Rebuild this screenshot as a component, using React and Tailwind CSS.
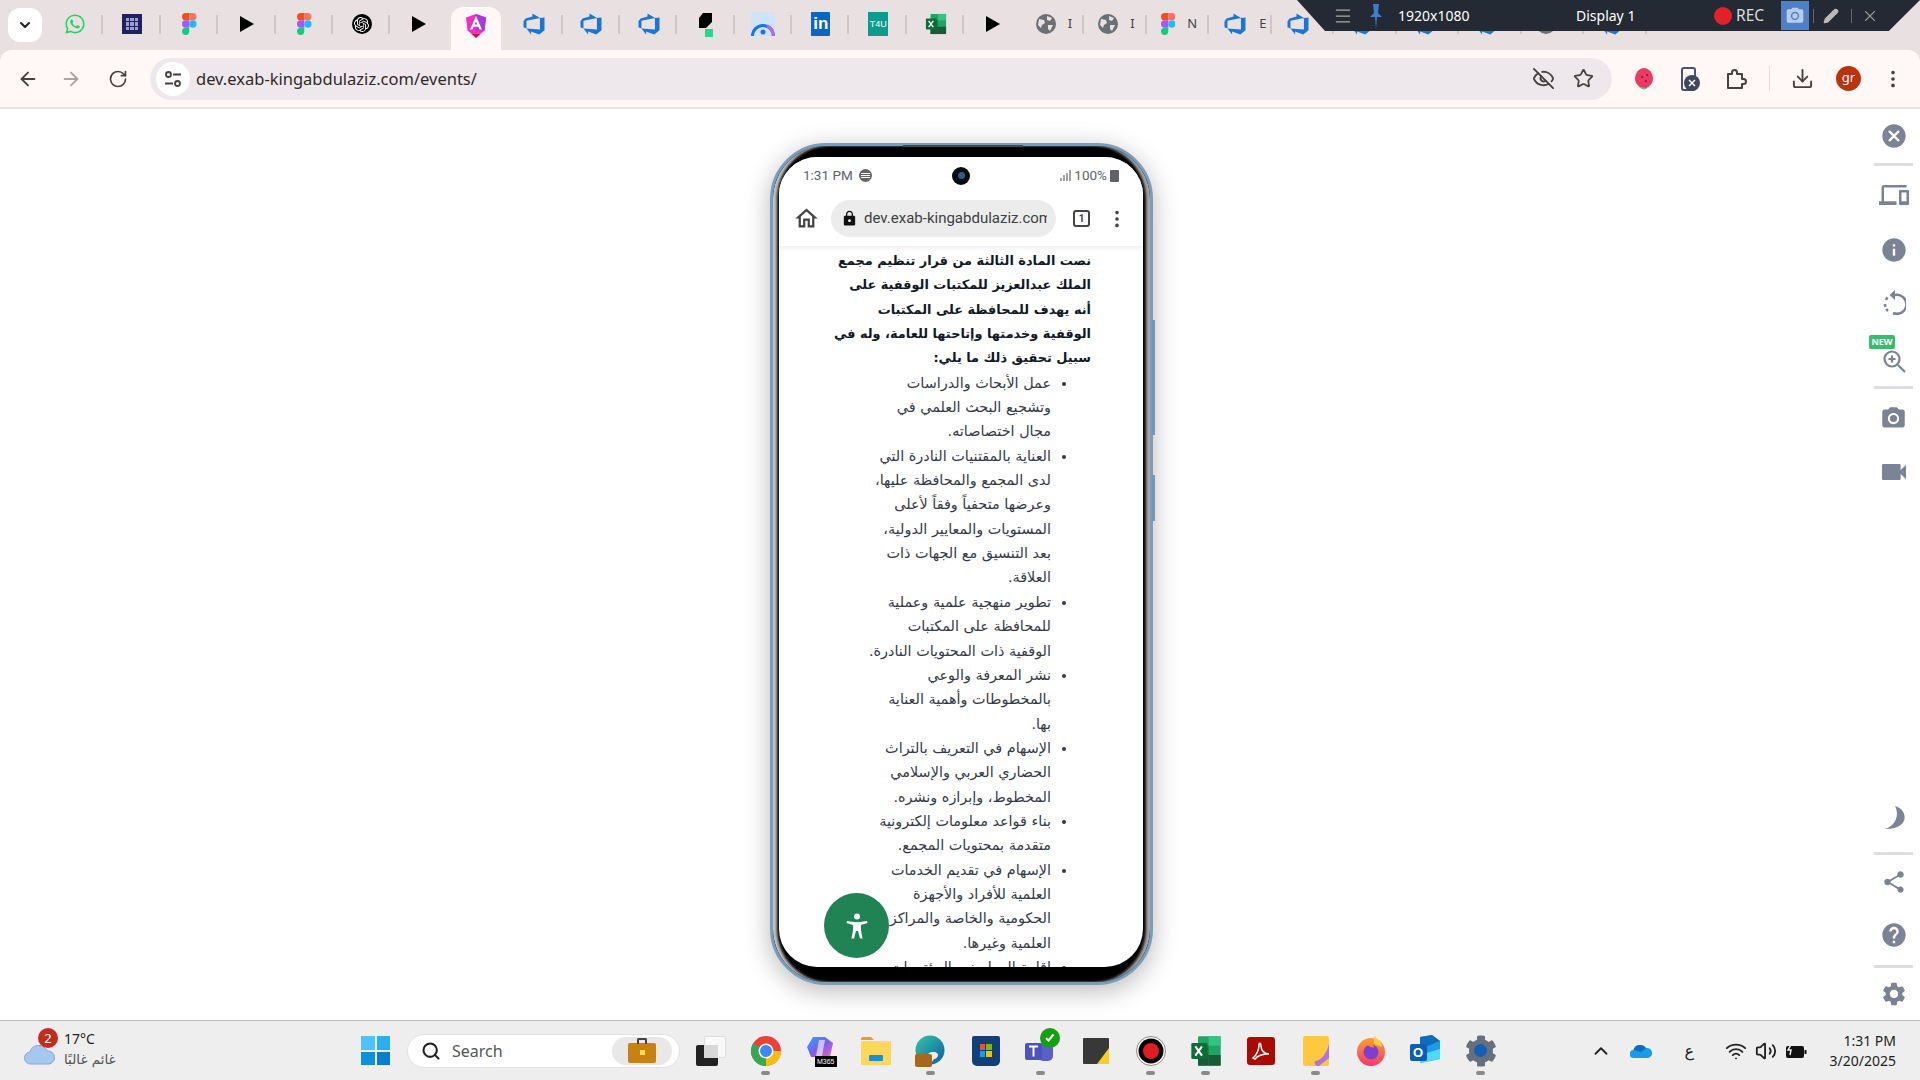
import React from "react";
import { ArrowLeft, ArrowRight, RotateCw, Star, EyeOff, Download, EllipsisVertical, Menu, Pencil, X, ChevronUp, Wifi, Volume2, Search } from "lucide-react";
import { FaWhatsapp, FaCog } from "react-icons/fa";
import { SiOpenai } from "react-icons/si";
import { VscAzureDevops } from "react-icons/vsc";
import { MdCancel, MdInfo, MdHelp, MdCameraAlt, MdVideocam, MdShare, MdSettings, MdDevices, MdLock, MdOutlineHome } from "react-icons/md";

const Figma = ({ s = 22 }) => (
  <svg width={s * 0.66} height={s} viewBox="0 0 16 24">
    <path d="M4 0h4v8H4a4 4 0 010-8z" fill="#f24e1e" />
    <path d="M8 0h4a4 4 0 010 8H8z" fill="#ff7262" />
    <path d="M4 8h4v8H4a4 4 0 010-8z" fill="#a259ff" />
    <circle cx="12" cy="12" r="4" fill="#1abcfe" />
    <path d="M4 16h4v4a4 4 0 11-4-4z" fill="#0acf83" />
  </svg>
);
const Play = () => <svg width="14" height="16" viewBox="0 0 14 16"><path d="M0 0l14 8-14 8z" fill="#000" /></svg>;
const Globe = () => (
  <svg width="20" height="20" viewBox="0 0 20 20">
    <circle cx="10" cy="10" r="10" fill="#6b6f76" />
    <path d="M3 5l5 1 1 3-3 2-1 3-3-3zM11 2l5 2-2 3-3-1zM12 11l5 0-3 6-2-2z" fill="#e9e0e1" />
  </svg>
);
const Azure = ({ s = 24 }) => <VscAzureDevops size={s} color="#1976d8" />;
const Excel = ({ s = 22 }) => (
  <svg width={s} height={s} viewBox="0 0 24 24">
    <rect x="6" y="1" width="17" height="22" rx="1" fill="#21a366" />
    <rect x="14" y="1" width="9" height="7" fill="#33c481" />
    <rect x="6" y="8" width="8" height="7" fill="#107c41" />
    <rect x="14" y="15" width="9" height="8" fill="#185c37" />
    <rect x="6" y="15" width="8" height="8" fill="#185c37" />
    <rect x="1" y="6" width="12" height="12" rx="1" fill="#0e6c3a" />
    <path d="M4 8.500l5 7M9 8.500l-5 7" stroke="#fff" strokeWidth="1.500" />
  </svg>
);

const tabs = [
  <FaWhatsapp size={22} color="#25d366" />,
  <div className="w-5 h-5 bg-[#23205f] grid grid-cols-3 gap-px p-1"><i className="bg-[#9aa0d8]" /><i className="bg-[#9aa0d8]" /><i className="bg-[#9aa0d8]" /><i className="bg-[#9aa0d8]" /><i className="bg-[#9aa0d8]" /><i className="bg-[#9aa0d8]" /><i className="bg-[#9aa0d8]" /><i className="bg-[#9aa0d8]" /><i className="bg-[#9aa0d8]" /></div>,
  <Figma />,
  <Play />,
  <Figma />,
  <div className="w-5 h-5 rounded-full bg-black flex items-center justify-center"><SiOpenai size={15} color="#fff" /></div>,
  <Play />,
  <svg width="20" height="24" viewBox="0 0 20 24"><path d="M10 0l10 3.500-1.500 13-3.500 3H5l-3.500-3L0 3.500z" fill="#f02fc2" /><path d="M10 0l10 3.500-1.500 13H10z" fill="#a43ae0" /><path d="M10 2l6 13.500h-2.600l-1-2.700H7.600l-1 2.700H4zM10 7.500L8.800 10.500h2.400z" fill="#fff" /><path d="M5 19.500h10l-5 4.500z" fill="#e4003a" /></svg>,
  <Azure />, <Azure />, <Azure />,
  <svg width="16" height="26" viewBox="0 0 16 26"><path d="M5 2h9v9l-6 6H1V7z" fill="#000" /><rect x="7" y="18" width="8" height="8" fill="#2bd48f" /></svg>,
  <svg width="24" height="24" viewBox="0 0 24 24"><rect width="24" height="24" rx="1" fill="#cfe3fb" /><path d="M1.500 24a10.500 10.500 0 0121 0" fill="none" stroke="#1a73e8" strokeWidth="3" /><path d="M16 14a10 10 0 016 10" fill="none" stroke="#b26cf0" strokeWidth="3" /><circle cx="12" cy="20" r="2.500" fill="#1a73e8" /></svg>,
  <div className="w-[19px] h-6 bg-[#0a66c2] rounded-[1px] text-white font-bold text-[17px] leading-6 text-center font-['Liberation_Sans',sans-serif]">in</div>,
  <div className="w-5 h-6 bg-[#0c9c8e] text-white text-[9px] leading-6 text-center font-['Liberation_Sans',sans-serif]">T4U</div>,
  <Excel />,
  <Play />,
];
const tabs2 = [
  [<Globe />, "I"], [<Globe />, "I"], [<Figma />, "N"], [<Azure />, "E"], [<Azure />, ""], [<Azure />, ""], [<Azure />, ""], [<Azure />, ""], [<Globe />, ""], [<Azure />, ""],
];

const Sep = () => <div className="w-[39px] h-[3px] bg-[#dcdde0] shrink-0" />;
const SideIcon = ({ children, h = 53 }) => <div className="flex items-center justify-center w-[39px] shrink-0" style={{ height: h }}>{children}</div>;
const bold = ["نصت المادة الثالثة من قرار تنظيم مجمع", "الملك عبدالعزيز للمكتبات الوقفية على", "أنه يهدف للمحافظة على المكتبات", "الوقفية وخدمتها وإتاحتها للعامة، وله في", "سبيل تحقيق ذلك ما يلي:"];
const items = [
  ["عمل الأبحاث والدراسات", "وتشجيع البحث العلمي في", "مجال اختصاصاته."],
  ["العناية بالمقتنيات النادرة التي", "لدى المجمع والمحافظة عليها،", "وعرضها متحفياً وفقاً لأعلى", "المستويات والمعايير الدولية،", "بعد التنسيق مع الجهات ذات", "العلاقة."],
  ["تطوير منهجية علمية وعملية", "للمحافظة على المكتبات", "الوقفية ذات المحتويات النادرة."],
  ["نشر المعرفة والوعي", "بالمخطوطات وأهمية العناية", "بها."],
  ["الإسهام في التعريف بالتراث", "الحضاري العربي والإسلامي", "المخطوط، وإبرازه ونشره."],
  ["بناء قواعد معلومات إلكترونية", "متقدمة بمحتويات المجمع."],
  ["الإسهام في تقديم الخدمات", "العلمية للأفراد والأجهزة", "الحكومية والخاصة والمراكز", "العلمية وغيرها."],
  ["إقامة المعارض والمؤتمرات"],
];

const taskIcons = [
  <svg width="32" height="32" viewBox="0 0 32 32"><circle cx="16" cy="16" r="15" fill="#ea4335" /><path d="M16 16L3 23.500A15 15 0 0016 31z" fill="#34a853" /><path d="M3 8.500A15 15 0 003 23.500L16 16z" fill="#34a853" /><path d="M16 16h15A15 15 0 0116 31z" fill="#fbbc04" /><circle cx="16" cy="16" r="7.500" fill="#fff" /><circle cx="16" cy="16" r="6" fill="#4285f4" /></svg>,
  <div className="relative w-8 h-8"><svg width="32" height="28" viewBox="0 0 32 28"><defs><linearGradient id="m" x1="0" y1="0" x2="1" y2="1"><stop offset="0" stopColor="#2fa8f5" /><stop offset=".5" stopColor="#7a5cf0" /><stop offset="1" stopColor="#f06bb5" /></linearGradient></defs><path d="M8 2h12l8 6-3 14H6L2 12z" fill="url(#m)" /><path d="M14 5h6l-3 16h-6z" fill="#fff" opacity=".6" /></svg><span className="absolute right-0 bottom-0 bg-black text-white text-[7px] leading-[11px] px-[2px] font-['Liberation_Sans',sans-serif]">M365</span></div>,
  <svg width="30" height="28" viewBox="0 0 30 28"><path d="M0 2a2 2 0 012-2h8l3 3H0z" fill="#e5a50a" /><rect y="4" width="30" height="24" rx="1" fill="#ffd75e" /><rect x="8" y="18" width="14" height="6" rx="1" fill="#1a8fd8" /></svg>,
  <div className="relative w-8 h-8"><svg width="30" height="30" viewBox="0 0 30 30"><defs><linearGradient id="e" x1="0" y1="0" x2="1" y2="1"><stop offset="0" stopColor="#33c9a5" /><stop offset="1" stopColor="#0c5ba8" /></linearGradient></defs><circle cx="15" cy="15" r="14.500" fill="url(#e)" /><path d="M11 30c-2-8 2-14 8-13 3 0 4 2 4 3 0 2-2 4-4 4-3 5-5 6-8 6z" fill="#eee" /></svg><span className="absolute left-0 bottom-0 w-[17px] h-[13px] rounded-[2px] bg-[#a8681c]" /></div>,
  <div className="w-[28px] h-[30px] rounded-b-[5px] rounded-t-[2px] bg-[#113f78] grid grid-cols-2 gap-[1px] p-[8px] content-center"><i className="h-[6px] bg-[#f25022]" /><i className="h-[6px] bg-[#7fba00]" /><i className="h-[6px] bg-[#00a4ef]" /><i className="h-[6px] bg-[#ffb900]" /></div>,
  <div className="relative w-8 h-8"><svg width="30" height="30" viewBox="0 0 30 30"><rect x="13" y="8" width="15" height="18" rx="5" fill="#5b5fc7" /><rect x="0" y="8" width="17" height="17" rx="2" fill="#4b53bc" /><path d="M4 11.500h9M8.500 11.500v10" stroke="#fff" strokeWidth="2" /></svg><span className="absolute -top-[7px] -right-[3px] w-5 h-5 rounded-full bg-[#13a10e] flex items-center justify-center"><svg width="11" height="11" viewBox="0 0 11 11"><path d="M2 6l2.500 2.500L9.500 2.500" fill="none" stroke="#fff" strokeWidth="2" /></svg></span></div>,
  <svg width="26" height="26" viewBox="0 0 26 26"><rect width="26" height="26" rx="1" fill="#383838" /><path d="M26 10v16H14z" fill="#f7cf1e" /></svg>,
  <svg width="30" height="30" viewBox="0 0 30 30"><circle cx="15" cy="15" r="14.500" fill="#fff" stroke="#888" /><circle cx="15" cy="15" r="12.500" fill="#000" /><circle cx="15" cy="15" r="8" fill="#e31b23" /></svg>,
  <Excel s={32} />,
  <div className="w-[28px] h-[28px] rounded-[3px] bg-[#aa0a00] flex items-center justify-center"><svg width="20" height="20" viewBox="0 0 20 20"><path d="M2 17c3-2 6-8 6-13 0-3 2-2 2 1 0 5 4 8 8 8-4 0-11 1-14 5z" fill="none" stroke="#fff" strokeWidth="1.500" /></svg></div>,
  <svg width="26" height="30" viewBox="0 0 26 30"><rect width="26" height="30" rx="2" fill="#ffc83d" /><path d="M26 8v14l-10 8c-3 0-5-2-4-5 6 0 12-8 14-17z" fill="#b16fe6" /></svg>,
  <svg width="30" height="30" viewBox="0 0 30 30"><defs><linearGradient id="f" x1="0" y1="0" x2="0" y2="1"><stop offset="0" stopColor="#ffa02e" /><stop offset="1" stopColor="#f5366c" /></linearGradient></defs><circle cx="15" cy="16" r="14" fill="url(#f)" /><path d="M18 0c4 3 8 7 8 11l-8-3z" fill="#ffce3a" /><circle cx="15" cy="16" r="7.500" fill="#7b3fd1" /><path d="M9 8c4-3 9 0 9 4-3-2-5-1-9-4z" fill="#ff8a2e" /></svg>,
  <div className="relative w-8 h-8"><svg width="32" height="30" viewBox="0 0 32 30"><path d="M10 2l12-2 8 6v18l-20 4z" fill="#1c9bea" /><path d="M10 2l12-2 8 6-20 8z" fill="#0f6cbd" /><path d="M10 20l20-6v10l-20 4z" fill="#50d9ff" /></svg><span className="absolute left-0 top-[9px] w-[17px] h-[17px] rounded-[2px] bg-[#0a5fb3] text-white text-[13px] leading-[17px] text-center font-['Liberation_Sans',sans-serif] font-bold">O</span></div>,
  <div className="relative w-8 h-8 flex items-center justify-center"><FaCog size={32} color="#66707c" /><span className="absolute w-[13px] h-[13px] rounded-full bg-[#1560b5]" /></div>,
];
const dotted = [0, 3, 5, 7, 8, 10, 13];

export default function App() {
  return (
    <div className="relative w-[1920px] h-[1080px] overflow-hidden flex flex-col bg-white font-['Noto_Sans','DejaVu_Sans',sans-serif]">
      {/* tab strip */}
      <div className="h-[50px] shrink-0 bg-[#e9e0e1] flex">
        <div className="w-[46px] shrink-0 pl-2 pt-2">
          <div className="w-[34px] h-[34px] rounded-[12px] bg-white flex items-center justify-center">
            <ChevronUp size={16} strokeWidth={3} className="rotate-180 text-[#222]" />
          </div>
        </div>
        {tabs.map((t, i) => (
          i === 7 ? (
            <div key={i} className="w-[57.400px] shrink-0 flex justify-center items-end">
              <div className="w-[50px] h-[43px] bg-[#fff8f6] rounded-t-[12px] flex items-center justify-center pb-[6px]">{t}</div>
            </div>
          ) : (
            <div key={i} className="relative w-[57.400px] shrink-0 h-[50px] flex items-center justify-center pb-[2px]">
              {t}
              {i !== 6 && i < 16 && <span className="absolute right-0 top-[15px] w-[2px] h-[19px] bg-[#cfc6c8]" />}
            </div>
          )
        ))}
        {tabs2.map(([t, l], i) => (
          <div key={i} className="relative w-[62.500px] shrink-0 h-[50px] flex items-center gap-3 pl-[14px] pb-[2px] text-[13px] text-[#444]">
            {t}{l && <span>{l}</span>}
            <span className="absolute right-0 top-[15px] w-[2px] h-[19px] bg-[#cfc6c8]" />
          </div>
        ))}
      </div>

      {/* toolbar */}
      <div className="h-[58px] shrink-0 bg-[#e9e0e1]">
        <div className="h-[57px] bg-[#fff8f6] rounded-t-[12px] flex items-center text-[#47423f]">
          <div className="w-[150px] shrink-0 flex items-center pl-[17px]">
            <ArrowLeft size={22} />
            <ArrowRight size={22} className="ml-[21px] text-[#a9a5a4]" />
            <RotateCw size={20} className="ml-[26px]" />
          </div>
          <div className="w-[1462px] h-[42px] rounded-full bg-[#eee8ec] flex items-center pl-[6px] pr-[18px]">
            <div className="w-[34px] h-[34px] rounded-full bg-white flex items-center justify-center">
              <svg width="18" height="18" viewBox="0 0 18 18" fill="none" stroke="currentColor" strokeWidth="1.800"><circle cx="4.500" cy="4.500" r="2.500" /><path d="M9 4.500h8M1 13.500h8" /><circle cx="13.500" cy="13.500" r="2.500" /></svg>
            </div>
            <span className="ml-[6px] mt-[2px] text-[16.500px] text-[#2e2a28] font-['Noto_Sans',sans-serif]">dev.exab-kingabdulaziz.com/events/</span>
            <div className="ml-auto flex items-center gap-[18px]">
              <EyeOff size={23} />
              <Star size={21} />
            </div>
          </div>
          <div className="flex-1 flex items-center pl-[22px]">
            <svg width="20" height="24" viewBox="0 0 20 24"><path d="M10 1c5 0 9 5 9 11 0 5-5 9-9 10C6 21 1 17 1 12 1 6 5 1 10 1z" fill="#ee3a63" /><path d="M5 20c3 3 7 3 8 1z" fill="#4fcf9a" /><circle cx="8" cy="10" r="1" fill="#7a1733" /><circle cx="13" cy="8" r="1" fill="#7a1733" /><circle cx="12" cy="14" r="1" fill="#7a1733" /></svg>
            <svg className="ml-[26px]" width="20" height="26" viewBox="0 0 20 26"><rect x="2" y="2" width="13" height="22" rx="2" fill="none" stroke="#47527a" strokeWidth="2" /><circle cx="12" cy="17" r="8" fill="#3f4760" /><path d="M9 14l6 6M15 14l-6 6" stroke="#fff" strokeWidth="1.500" /></svg>
            <svg className="ml-[25px]" width="22" height="22" viewBox="0 0 22 22" fill="none" stroke="currentColor" strokeWidth="2" strokeLinejoin="round"><path d="M3 6h4V4.500a2.500 2.500 0 015 0V6h5v5h1.500a2.500 2.500 0 010 5H17v4H3z" /></svg>
            <span className="ml-[22px] w-[1px] h-[25px] bg-[#edd6d6]" />
            <Download size={23} className="ml-[21px]" />
            <div className="ml-[22px] w-[25px] h-[25px] rounded-full bg-[#b9340c] text-white text-[13px] leading-[23px] text-center">gr</div>
            <EllipsisVertical size={22} className="ml-[21px]" />
          </div>
        </div>
      </div>

      {/* content */}
      <div className="flex-1 min-h-0 flex border-t border-[#e6e2df]">
        <div className="w-[1874px] shrink-0 pt-[34px] pl-[770px]">
          <div className="relative w-[383px] h-[842px] rounded-[56px] border-[3px] border-[#7a9dba] bg-black pl-[6px] pr-[7px] pt-[11px] pb-[15px] shadow-[0_6px_26px_rgba(0,0,0,0.28),inset_5px_0_3px_-1px_#c4c4c4,inset_-5px_0_3px_-1px_#a8a8a8]">
            <span className="absolute left-[130px] -top-[1px] w-[120px] h-[2px] bg-[#3c4a56]" />
            <span className="absolute -right-[5px] top-[174px] w-[3px] h-[115px] bg-[#7098b8]" />
            <span className="absolute -right-[5px] top-[329px] w-[3px] h-[46px] bg-[#7098b8]" />
            <div className="relative w-full h-full bg-white rounded-[38px] overflow-hidden flex flex-col">
              <div className="shrink-0 h-[89px] shadow-[0_2px_5px_rgba(0,0,0,0.08)] z-10 bg-white">
                <div className="h-[35px] flex items-center pt-[2px] pl-[24px] pr-[24px] text-[13.500px] text-[#5f6368] font-['Roboto',sans-serif]">
                  <span>1:31 PM</span>
                  <span className="ml-[6px] w-[13px] h-[13px] rounded-full bg-[#666] flex flex-col justify-center gap-[1px] px-[2px]"><i className="h-px bg-white" /><i className="h-px bg-white" /><i className="h-px bg-white" /></span>
                  <span className="mx-auto -translate-x-[5px] w-[18px] h-[18px] rounded-full bg-[#07090d] flex items-center justify-center"><i className="w-[7px] h-[7px] rounded-full bg-[#2c5d90]" /></span>
                  <svg className="mr-[3px]" width="11" height="11" viewBox="0 0 11 11"><path d="M1 8v3M4 5v6M7 3v8M10 0v11" stroke="#666" strokeWidth="1.200" /></svg>
                  <span>100%</span>
                  <span className="ml-[3px] w-[9px] h-[12px] bg-[#5f6368] rounded-[1px]" />
                </div>
                <div className="h-[53px] flex items-center">
                  <MdOutlineHome size={27} className="ml-[14px] text-[#444]" />
                  <div className="ml-[11px] w-[225px] h-[37px] rounded-full bg-[#ececec] flex items-center pl-[10px] pr-[9px] overflow-hidden">
                    <MdLock size={17} className="shrink-0 text-[#111]" />
                    <span className="ml-[6px] text-[15px] text-[#3c4043] whitespace-nowrap overflow-hidden font-['Roboto',sans-serif]">dev.exab-kingabdulaziz.com</span>
                  </div>
                  <div className="ml-[17px] w-[17px] h-[17px] rounded-[3px] border-2 border-[#444] text-[10px] leading-[13px] text-center font-bold text-[#444] font-['Roboto',sans-serif]">1</div>
                  <EllipsisVertical size={22} className="ml-[16px] text-[#444]" />
                </div>
              </div>
              <div dir="rtl" className="flex-1 min-h-0 overflow-hidden pr-[52px] pt-[3px] text-[14.400px] leading-[24.350px] whitespace-nowrap font-['DejaVu_Sans',sans-serif]">
                <div className="font-bold text-[12.900px] text-[#111827]">
                  {bold.map((l) => <span key={l} className="block">{l}</span>)}
                </div>
                <ul className="list-disc pr-[40px] text-[#343a46]">
                  {items.map((it) => <li key={it[0]}>{it.map((l) => <span key={l} className="block">{l}</span>)}</li>)}
                </ul>
              </div>
              <div className="absolute left-[45px] bottom-[9px] w-[65px] h-[65px] rounded-full bg-[#1f8354] flex items-center justify-center z-20">
                <svg width="22" height="26" viewBox="0 0 22 26" fill="#fff"><circle cx="11" cy="3.500" r="3" /><path d="M1 8l7 1h6l7-1 .5 2-6.500 2v5l1.500 8.500h-2.500L12 18h-2l-2 7.500H5.500L7 17v-5L.5 10z" /></svg>
              </div>
            </div>
          </div>
        </div>

        {/* side rail */}
        <div className="flex-1 flex flex-col text-[#7b8496]">
          <SideIcon h={54}><MdCancel size={28} /></SideIcon>
          <Sep />
          <SideIcon h={58}><MdDevices size={30} /></SideIcon>
          <SideIcon h={52}><MdInfo size={28} /></SideIcon>
          <SideIcon h={53}>
            <svg width="24" height="26" viewBox="0 0 24 26" fill="none" stroke="currentColor" strokeWidth="2.500"><path d="M13 5a9.500 9.500 0 11-2 18" /><path d="M3 14a9.500 9.500 0 003 7" strokeDasharray="3 2" /><path d="M4 10a9 9 0 013-4" strokeDasharray="3 2" /><path d="M13 0L7.500 5 13 10z" fill="currentColor" stroke="none" /></svg>
          </SideIcon>
          <div className="relative h-[57px] flex items-center justify-center w-[39px] shrink-0">
            <span className="absolute -left-[5px] top-[6px] w-[26px] h-[14px] rounded-[2px] bg-[#3dbb6c] text-white text-[9px] leading-[14px] font-bold text-center z-10 font-['Open_Sans',sans-serif]">NEW</span>
            <svg className="mt-[6px] ml-[1px]" width="24" height="24" viewBox="0 0 24 24" fill="none" stroke="currentColor" strokeWidth="2.200"><circle cx="10" cy="10" r="7.500" /><path d="M16 16l7 7M10 6.500v7M6.500 10h7" /></svg>
          </div>
          <Sep />
          <SideIcon h={58}><MdCameraAlt size={27} /></SideIcon>
          <SideIcon h={50}><MdVideocam size={32} /></SideIcon>
          <div className="mt-auto" />
          <div className="mb-[10px]">
            <SideIcon h={48}>
              <svg width="24" height="24" viewBox="0 0 24 24" fill="currentColor"><path d="M13 0C26 3 29 24 2 23 10 22 19 12 13 0z" /></svg>
            </SideIcon>
          </div>
          <Sep />
          <SideIcon h={54}><MdShare size={26} /></SideIcon>
          <div className="mb-[5px]"><SideIcon h={51}><MdHelp size={28} /></SideIcon></div>
          <Sep />
          <SideIcon h={52}><MdSettings size={28} /></SideIcon>
        </div>
      </div>

      {/* taskbar */}
      <div className="h-[60px] shrink-0 border-t border-[#bcbcbc] bg-[#eeeeee] flex items-center text-[#222]">
        <div className="relative w-[361px] shrink-0 h-full">
          <svg className="absolute left-[24px] top-[24px]" width="32" height="20" viewBox="0 0 32 18"><path d="M7 18a6 6 0 01-1-12 9 9 0 0117-1 6.500 6.500 0 012 13z" fill="#a7c8ee" stroke="#7fa8da" /></svg>
          <span className="absolute left-[38px] top-[7px] w-[20px] h-[20px] rounded-full bg-[#c42b1c] text-white text-[13px] leading-[20px] text-center">2</span>
          <span className="absolute left-[64px] top-[8px] text-[14px] leading-[20px]">17°C</span>
          <span dir="rtl" className="absolute left-[64px] top-[28px] text-[13.500px] leading-[20px] text-[#555] font-['DejaVu_Sans',sans-serif]">غائم غالبًا</span>
        </div>
        <div className="grid grid-cols-2 gap-[2px] w-[29px] h-[29px] shrink-0">
          <i className="bg-[#4cc2ff]" /><i className="bg-[#2aaef2]" /><i className="bg-[#0f8fe0]" /><i className="bg-[#0a7dd0]" />
        </div>
        <div className="ml-[17px] w-[273px] h-[34px] rounded-full bg-white border border-[#e2e2e2] shrink-0 flex items-center pl-[13px] pr-[7px]">
          <Search size={20} strokeWidth={2.500} />
          <span className="ml-[11px] text-[16px] text-[#555]">Search</span>
          <div className="ml-auto w-[60px] h-[28px] rounded-full bg-[#e8e8e8] flex items-center justify-center">
            <div className="relative w-[28px] h-[20px] mt-[4px] rounded-[2px] bg-[#c98110] flex items-center justify-center">
              <span className="absolute -top-[5px] left-[9px] w-[10px] h-[6px] border-2 border-b-0 border-[#444] rounded-t-[2px]" />
              <i className="w-[5px] h-[5px] bg-[#ffe04a]" />
            </div>
          </div>
        </div>
        <div className="relative ml-[16px] w-[30px] h-[30px] shrink-0">
          <span className="absolute left-[8px] top-0 w-[22px] h-[22px] rounded-[2px] bg-[#f9f9f9] border border-[#ddd]" />
          <span className="absolute left-0 top-[9px] w-[22px] h-[21px] rounded-[2px] bg-[#222]" />
          <span className="absolute left-[8px] top-[9px] w-[14px] h-[13px] bg-[#d8d8d8]" />
        </div>
        <div className="ml-[12px] flex">
          {taskIcons.map((ic, i) => (
            <div key={i} className="relative w-[55px] h-[58px] flex items-center justify-center">
              {ic}
              {dotted.includes(i) && <span className="absolute left-[23px] bottom-[5px] w-[9px] h-[4px] rounded-full bg-[#8a8a8a]" />}
            </div>
          ))}
        </div>
        <div className="ml-auto flex items-center pr-[24px]">
          <ChevronUp size={22} strokeWidth={2} />
          <svg className="ml-[18px]" width="22" height="14" viewBox="0 0 22 14"><path d="M4 14a4 4 0 01-.5-8A7 7 0 0116 4a5 5 0 012 10z" fill="#1a9bea" /><path d="M3.500 6A7 7 0 0116 4l-5 4z" fill="#0f6cbd" /></svg>
          <span className="ml-[33px] w-[14px] text-[16px] font-['DejaVu_Sans',sans-serif]">ع</span>
          <Wifi size={22} className="ml-[26px]" />
          <Volume2 size={22} className="ml-[8px]" />
          <svg className="ml-[8px]" width="22" height="16" viewBox="0 0 22 16"><rect x="1" y="3" width="18" height="12" rx="2" fill="#111" /><rect x="19.500" y="7" width="2" height="4" fill="#111" /><path d="M7 0L3 7h3l-1 5" fill="none" stroke="#eee" strokeWidth="1.500" /></svg>
          <div className="ml-[23px] text-right text-[14px] leading-[20px] text-[#222]">
            <div>1:31 PM</div>
            <div>3/20/2025</div>
          </div>
        </div>
      </div>

      {/* floating screen-recorder bar */}
      <div className="absolute left-[1297px] top-0 w-[623px] h-[31px] bg-[#232a33] [clip-path:polygon(0_0,100%_0,95%_100%,4.500%_100%)] flex items-center text-white">
        <Menu size={20} strokeWidth={1.500} className="ml-[36px] text-[#aaa]" />
        <svg className="ml-[16px]" width="14" height="26" viewBox="0 0 14 26"><path d="M4 1h6l-1 9 4 4H1l4-4zM6 14h2l-1 12z" fill="#3a7fd0" /></svg>
        <span className="ml-[15px] w-[72px] text-[14px]">1920x1080</span>
        <span className="ml-[106px] w-[62px] text-[14px]">Display 1</span>
        <span className="ml-[76px] w-[18px] h-[18px] rounded-full bg-[#e5202a]" />
        <span className="ml-[4px] w-[35px] text-[15.500px] text-[#ddd]">REC</span>
        <div className="ml-[10px] w-[28px] h-[29px] bg-[#4f80c6] flex items-center justify-center"><MdCameraAlt size={20} color="#b8cde8" /></div>
        <span className="ml-[4px] w-px h-[14px] bg-[#667]" />
        <Pencil size={16} className="ml-[9px] text-[#bbb]" fill="#bbb" />
        <span className="ml-[12px] w-px h-[14px] bg-[#667]" />
        <X size={18} strokeWidth={1.500} className="ml-[9px] text-[#999]" />
      </div>
    </div>
  );
}
